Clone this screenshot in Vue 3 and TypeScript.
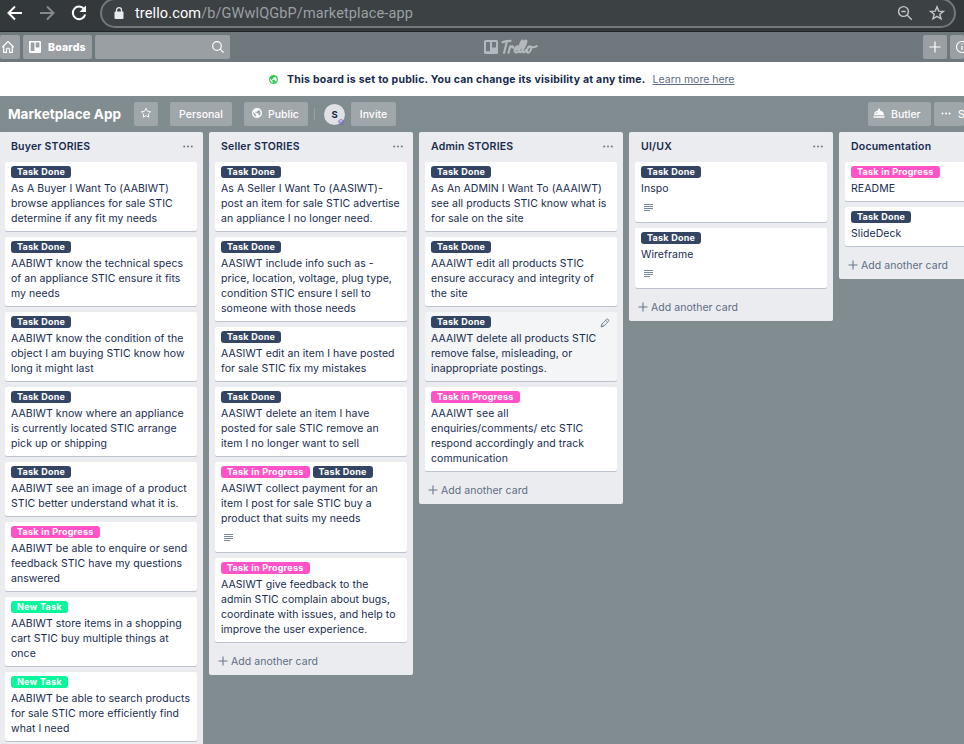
<script setup lang="ts">
type Kind = 'done' | 'progress' | 'fresh'

interface Card {
  labels: Kind[]
  lines: string[]
  description?: boolean
  hovered?: boolean
}

interface List {
  title: string
  cards: Card[]
}

const labelText: Record<Kind, string> = {
  done: 'Task Done',
  progress: 'Task in Progress',
  fresh: 'New Task',
}

const lists: List[] = [
  {
    title: 'Buyer STORIES',
    cards: [
      { labels: ['done'], lines: ['As A Buyer I Want To (AABIWT)', 'browse appliances for sale STIC', 'determine if any fit my needs'] },
      { labels: ['done'], lines: ['AABIWT know the technical specs', 'of an appliance STIC ensure it fits', 'my needs'] },
      { labels: ['done'], lines: ['AABIWT know the condition of the', 'object I am buying STIC know how', 'long it might last'] },
      { labels: ['done'], lines: ['AABIWT know where an appliance', 'is currently located STIC arrange', 'pick up or shipping'] },
      { labels: ['done'], lines: ['AABIWT see an image of a product', 'STIC better understand what it is.'] },
      { labels: ['progress'], lines: ['AABIWT be able to enquire or send', 'feedback STIC have my questions', 'answered'] },
      { labels: ['fresh'], lines: ['AABIWT store items in a shopping', 'cart STIC buy multiple things at', 'once'] },
      { labels: ['fresh'], lines: ['AABIWT be able to search products', 'for sale STIC more efficiently find', 'what I need'] },
    ],
  },
  {
    title: 'Seller STORIES',
    cards: [
      { labels: ['done'], lines: ['As A Seller I Want To (AASIWT)-', 'post an item for sale STIC advertise', 'an appliance I no longer need.'] },
      { labels: ['done'], lines: ['AASIWT include info such as -', 'price, location, voltage, plug type,', 'condition STIC ensure I sell to', 'someone with those needs'] },
      { labels: ['done'], lines: ['AASIWT edit an item I have posted', 'for sale STIC fix my mistakes'] },
      { labels: ['done'], lines: ['AASIWT delete an item I have', 'posted for sale STIC remove an', 'item I no longer want to sell'] },
      { labels: ['progress', 'done'], lines: ['AASIWT collect payment for an', 'item I post for sale STIC buy a', 'product that suits my needs'], description: true },
      { labels: ['progress'], lines: ['AASIWT give feedback to the', 'admin STIC complain about bugs,', 'coordinate with issues, and help to', 'improve the user experience.'] },
    ],
  },
  {
    title: 'Admin STORIES',
    cards: [
      { labels: ['done'], lines: ['As An ADMIN I Want To (AAAIWT)', 'see all products STIC know what is', 'for sale on the site'] },
      { labels: ['done'], lines: ['AAAIWT edit all products STIC', 'ensure accuracy and integrity of', 'the site'] },
      { labels: ['done'], lines: ['AAAIWT delete all products STIC', 'remove false, misleading, or', 'inappropriate postings.'], hovered: true },
      { labels: ['progress'], lines: ['AAAIWT see all', 'enquiries/comments/ etc STIC', 'respond accordingly and track', 'communication'] },
    ],
  },
  {
    title: 'UI/UX',
    cards: [
      { labels: ['done'], lines: ['Inspo'], description: true },
      { labels: ['done'], lines: ['Wireframe'], description: true },
    ],
  },
  {
    title: 'Documentation',
    cards: [
      { labels: ['progress'], lines: ['README'] },
      { labels: ['done'], lines: ['SlideDeck'] },
    ],
  },
]
</script>

<template>
  <div class="window">
    <div class="chrome">
      <div class="nav">
        <svg width="18" height="18" viewBox="0 0 18 18" class="nav-icon"><path d="M16 9H3M9 2.5 2.5 9 9 15.5" /></svg>
        <svg width="18" height="18" viewBox="0 0 18 18" class="nav-icon dim"><path d="M2 9h13M9 2.5 15.500 9 9 15.500" /></svg>
        <svg width="18" height="18" viewBox="0 0 18 18" class="nav-icon"><path d="M14.300 5.300A6.300 6.300 0 1 0 15.200 10.500" /><path class="solid" d="M16 1.500V8H9.500Z" /></svg>
      </div>
      <div class="address">
        <svg class="lock" width="10" height="13" viewBox="0 0 10 13"><rect x="0.500" y="4.500" width="9" height="7.500" rx="1" fill="#e8eaed" /><path d="M2.500 5V3.200a2.500 2.500 0 0 1 5 0V5" fill="none" stroke="#e8eaed" stroke-width="1.300" /></svg>
        <span class="url"><b>trello.com</b>/b/GWwlQGbP/marketplace-app</span>
        <svg class="zoom" width="16" height="16" viewBox="0 0 16 16"><circle cx="6.500" cy="6.500" r="4.900" /><path d="M4.300 6.500h4.400M10 10l4.800 4.800" /></svg>
        <svg class="fav" width="16" height="16" viewBox="0 0 16 16"><path d="M8 1.800 9.700 6.100l4.600.3-3.500 2.900 1.200 4.500L8 11.300l-4 2.500 1.200-4.500L1.700 6.400l4.600-.3Z" /></svg>
      </div>
    </div>

    <header class="topbar">
      <div class="btn home"><svg width="14" height="14" viewBox="0 0 14 14" class="line"><path d="M1.300 7.200 7 1.600l5.700 5.600M2.700 6.200v6.200h2.800V9.500a1.500 1.500 0 0 1 3 0v2.900h2.800V6.200" /></svg></div>
      <div class="btn boards">
        <svg width="12" height="12" viewBox="0 0 12 12"><path fill="#fff" fill-rule="evenodd" d="M1 0h10a1 1 0 0 1 1 1v10a1 1 0 0 1-1 1H1a1 1 0 0 1-1-1V1a1 1 0 0 1 1-1Zm.700 1.500v8.500h3.700V1.500Zm5 0v5h3.700v-5Z" /></svg>
        <span>Boards</span>
      </div>
      <div class="btn search"><svg width="14" height="14" viewBox="0 0 14 14" class="line"><circle cx="6" cy="6" r="4.300" /><path d="m9.200 9.200 3.300 3.300" /></svg></div>
      <div class="logo">
        <svg width="14" height="14" viewBox="0 0 14 14"><path fill="#b3b9bc" fill-rule="evenodd" d="M1.500 0h11A1.500 1.500 0 0 1 14 1.500v11a1.500 1.500 0 0 1-1.500 1.500h-11A1.500 1.500 0 0 1 0 12.500v-11A1.500 1.500 0 0 1 1.500 0Zm.500 2v9.300h4V2Zm6 0v5.500h4V2Z" /></svg>
        <svg class="wordmark" width="40" height="17" viewBox="0 0 40 17">
          <path d="M3.500 4.200C5.500 3.200 8 3 11.500 2.900M8 3.300 5 15M11.200 8.300 9.500 14.800M10.700 10.500C12 8.200 14.500 7.300 14 9.700M15.700 12.200c2.800-.6 4.600-3.500 3-3.900-1.700-.3-3.300 2.700-3.100 4.600.3 2.600 3 1.900 4.700-1 2.200-3.600 4.700-9.200 3.200-9.400-1.500 0-3.700 8-3.300 10.500.5 2.300 2.400.9 3.700-1.500 2.200-3.700 4.500-8.800 3-9-1.600 0-3.800 7.800-3.400 10.500.5 2.300 2.500 1.200 3.700-1.200M31.200 8.400c-2.400-.2-4.400 5.200-2.600 6.200 2.100.9 5.200-5.300 2.600-6.200ZM32.200 8.900c1.300.7 3.200.4 5.600-.8" />
        </svg>
      </div>
      <div class="btn plus"><svg width="14" height="14" viewBox="0 0 14 14" class="line"><path d="M7 1.500v11M1.500 7h11" /></svg></div>
      <div class="btn info"><svg width="14" height="14" viewBox="0 0 14 14" class="line"><circle cx="7" cy="7" r="5.500" /><path d="M7 6v4M7 3.600v1" /></svg></div>
    </header>

    <div class="notice">
      <svg width="9" height="9" viewBox="0 0 16 16"><circle cx="8" cy="8" r="8" fill="#2fcb53" /><path fill="#fff" d="M7 13.900A6 6 0 0 1 2.200 6.500L6 10.300v.7c0 .7.500 1.300 1 1.300Zm5.300-1.700c-.2-.6-.7-1-1.400-1h-.7V9c0-.4-.3-.7-.7-.7H5.500V6.800H7c.4 0 .7-.3.700-.7V4.600h1.500c.8 0 1.400-.6 1.400-1.400v-.3a6 6 0 0 1 1.700 9.300Z" /></svg>
      <b>This board is set to public. You can change its visibility at any time.</b>
      <a>Learn more here</a>
    </div>

    <div class="boardbar">
      <h1>Marketplace App</h1>
      <div class="btn star"><svg width="12" height="12" viewBox="0 0 16 16" class="line"><path d="M8 1.800 9.900 5.700l4.300.6-3.100 3 .7 4.300L8 11.600l-3.800 2 .7-4.300-3.100-3 4.300-.6Z" /></svg></div>
      <div class="btn personal">Personal</div>
      <div class="btn public">
        <svg width="10" height="10" viewBox="0 0 16 16"><path fill="#fff" fill-rule="evenodd" d="M8 0a8 8 0 1 1 0 16A8 8 0 0 1 8 0ZM7 13.900v-1.600c-.5 0-1-.6-1-1.300v-.7L2.200 6.500A6 6 0 0 0 7 13.900Zm5.300-1.700a6 6 0 0 0-1.700-9.300v.3c0 .8-.6 1.400-1.400 1.400H7.700v1.500c0 .4-.3.700-.7.700H5.500v1.500h4c.4 0 .7.300.7.700v2.200h.7c.7 0 1.200.4 1.400 1Z" /></svg>
        <span>Public</span>
      </div>
      <i class="divider"></i>
      <div class="avatar">S<svg class="rank" width="6" height="6" viewBox="0 0 6 6"><path d="M1 3.300V1.500Q1 .800 3 .800T5 1.500v1.800M.500 3.200h5M.500 5.300h5" /></svg></div>
      <div class="btn invite">Invite</div>
      <div class="btn butler">
        <svg width="12" height="11" viewBox="0 0 12 11"><path fill="#fff" d="M1 7a5 4.600 0 0 1 4-4.400V1.500A1 1 0 0 1 7 1.500v1.100A5 4.600 0 0 1 11 7Z" /><path d="m2.500 6 2-2" stroke="#9fa7aa" stroke-width=".800" /><path fill="#fff" opacity=".750" d="M0.500 7.700h11v2.300h-11Z" /></svg>
        <span>Butler</span>
      </div>
      <div class="btn menu">
        <svg width="10" height="3" viewBox="0 0 10 3" fill="#fff"><circle cx="1.500" cy="1.500" r="1" /><circle cx="5" cy="1.500" r="1" /><circle cx="8.500" cy="1.500" r="1" /></svg>
        <span>Show Menu</span>
      </div>
    </div>

    <main class="board">
      <section v-for="list in lists" :key="list.title" class="list">
        <div class="list-head">
          <h2>{{ list.title }}</h2>
          <svg width="10" height="3" viewBox="0 0 10 3" fill="#6b778c"><circle cx="1.200" cy="1.500" r="1" /><circle cx="5" cy="1.500" r="1" /><circle cx="8.800" cy="1.500" r="1" /></svg>
        </div>
        <div class="cards">
          <article v-for="card in list.cards" :key="card.lines[0]" class="card" :class="{ hovered: card.hovered }">
            <div class="labels">
              <span v-for="kind in card.labels" :key="kind" class="label" :class="kind">{{ labelText[kind] }}</span>
            </div>
            <p v-for="line in card.lines" :key="line">{{ line }}</p>
            <div v-if="card.description" class="badges">
              <svg width="9" height="8" viewBox="0 0 9 8"><path d="M0 .500h9M0 2.500h9M0 4.500h9M0 6.500h6" stroke="#7a869a" stroke-width="1" /></svg>
            </div>
            <svg v-if="card.hovered" class="pencil" width="10" height="10" viewBox="0 0 10 10"><path d="M1 9 1.700 6.300 6.600 1.300Q7.400.600 8.300 1.500T8.500 3.300L3.600 8.300ZM5.700 2.300 7.600 4.200M2 6.400 3.600 8" /></svg>
          </article>
        </div>
        <div class="add">
          <svg width="10" height="10" viewBox="0 0 10 10"><path d="M5 .500v9M.500 5h9" stroke="#6b778c" stroke-width="1.100" /></svg>
          <span>Add another card</span>
        </div>
      </section>
    </main>
  </div>
</template>

<style>
body {
  margin: 0;
  overflow: hidden;
}
</style>

<style scoped>
* {
  box-sizing: border-box;
}
.window {
  width: 964px;
  height: 744px;
  overflow: hidden;
  display: flex;
  flex-direction: column;
  background: #818c90;
  color: #172b4d;
  font-family: Inter, "Liberation Sans", sans-serif;
  font-size: 10.5px;
}
svg {
  display: block;
  flex: none;
}
.chrome {
  height: 32px;
  flex: none;
  display: flex;
  align-items: flex-start;
  background: #33383b;
  border-bottom: 1px solid #202426;
  overflow: hidden;
}
.nav {
  width: 100px;
  flex: none;
  display: flex;
  gap: 14px;
  padding: 4px 0 0 6px;
}
.nav-icon {
  fill: none;
  stroke: #fff;
  stroke-width: 2;
}
.nav-icon .solid {
  fill: #fff;
  stroke: none;
}
.dim {
  stroke: #85898b;
}
.address {
  width: 856px;
  height: 30px;
  flex: none;
  margin-top: -2px;
  display: flex;
  align-items: center;
  padding: 0 9px 0 12px;
  border: 2px solid #74787a;
  border-radius: 15px;
  background: #3c4144;
}
.url {
  margin-left: 11px;
  flex: 1;
  font-family: Roboto, sans-serif;
  font-size: 14.5px;
  letter-spacing: 0.12px;
  white-space: nowrap;
  color: #9aa0a4;
}
.url b {
  font-weight: 400;
  color: #fff;
}
.zoom,
.fav {
  fill: none;
  stroke: #c3c6c8;
  stroke-width: 1.4;
}
.fav {
  margin-left: 16px;
}
.topbar {
  height: 30px;
  flex: none;
  display: flex;
  align-items: center;
  gap: 3px;
  background: #6f787d;
  overflow: hidden;
}
.btn {
  height: 24px;
  flex: none;
  display: flex;
  align-items: center;
  border-radius: 2px;
  background: #9fa7aa;
  color: #fff;
  font-weight: 500;
  white-space: nowrap;
}
.topbar .btn {
  background: #999fa3;
}
.line {
  fill: none;
  stroke: #fff;
  stroke-width: 1.2;
}
.home {
  width: 20px;
  padding-left: 1px;
}
.boards {
  width: 69px;
  padding-left: 6px;
  gap: 7px;
  font-weight: 800;
  letter-spacing: 0.2px;
}
.search {
  width: 135px;
  justify-content: flex-end;
  padding-right: 5px;
}
.logo {
  flex: 1;
  display: flex;
  align-items: center;
  gap: 1px;
  padding-left: 251px;
}
.wordmark {
  margin-bottom: 1px;
  fill: none;
  stroke: #b3b9bc;
  stroke-width: 2.1;
  stroke-linecap: round;
}
.plus {
  width: 24px;
  justify-content: center;
}
.info {
  width: 14px;
  padding-left: 5px;
  overflow: hidden;
}
.notice {
  height: 34px;
  flex: none;
  display: flex;
  align-items: center;
  padding-left: 269px;
  background: #fff;
  white-space: nowrap;
}
.notice b {
  margin-left: 9px;
  font-weight: 700;
  letter-spacing: 0.24px;
}
.notice a {
  margin-left: 7px;
  color: #5e6c84;
  text-decoration: underline;
}
.boardbar {
  height: 36px;
  flex: none;
  display: flex;
  align-items: center;
  padding-left: 8px;
  overflow: hidden;
}
h1 {
  width: 126px;
  flex: none;
  margin: 0;
  font-size: 13.5px;
  font-weight: 700;
  color: #fff;
  white-space: nowrap;
}
.star {
  width: 24px;
  justify-content: center;
}
.star svg {
  margin-bottom: 2px;
}
.personal {
  width: 62px;
  margin-left: 12px;
  justify-content: center;
}
.public {
  width: 64px;
  margin-left: 12px;
  padding-left: 8px;
  gap: 6px;
}
.public svg {
  margin-bottom: 2px;
}
.divider {
  width: 1px;
  height: 12px;
  flex: none;
  margin: 0 9px 0 6px;
  background: #99a1a5;
}
.avatar {
  position: relative;
  width: 21px;
  height: 21px;
  flex: none;
  display: flex;
  align-items: center;
  justify-content: center;
  border-radius: 50%;
  background: #dfe1e6;
  font-size: 9.5px;
  font-weight: 700;
}
.rank {
  position: absolute;
  right: 1px;
  bottom: 0;
  fill: none;
  stroke: #7a63c8;
  stroke-width: 0.9;
}
.invite {
  width: 45px;
  margin-left: 6px;
  justify-content: center;
}
.butler {
  width: 63px;
  margin-left: auto;
  padding-left: 5px;
  gap: 6px;
}
.butler svg {
  margin-bottom: 1px;
}
.menu {
  width: 30px;
  margin-left: 3px;
  padding-left: 7px;
  gap: 7px;
  overflow: hidden;
}
.menu svg {
  margin-bottom: 2px;
}
.board {
  flex: 1;
  min-height: 0;
  display: flex;
  align-items: flex-start;
  gap: 6px;
  margin-left: -1px;
}
.list {
  width: 204px;
  flex: none;
  padding: 0 6px;
  border-radius: 2px;
  background: #ebecf0;
}
.list-head {
  height: 30px;
  display: flex;
  align-items: center;
  justify-content: space-between;
  padding: 0 4px 1px 6px;
}
.list-head svg {
  margin-bottom: 1px;
}
h2 {
  margin: 0;
  font-size: 10.5px;
  font-weight: 600;
  letter-spacing: 0.2px;
  white-space: nowrap;
}
.cards {
  display: flex;
  flex-direction: column;
  gap: 6px;
}
.card {
  position: relative;
  padding: 4px 6px 5px;
  border-radius: 2px;
  background: #fff;
  box-shadow: 0 1px 0 #bcc2ce;
}
.hovered {
  background: #f4f5f7;
}
.labels {
  display: flex;
  gap: 3px;
  margin-bottom: 3px;
}
.label {
  height: 12px;
  padding: 0 6px;
  border-radius: 3px;
  color: #fff;
  font-size: 9px;
  font-weight: 700;
  line-height: 12px;
  letter-spacing: 0.25px;
  white-space: nowrap;
}
.done {
  background: #344563;
}
.progress {
  background: #ff53c7;
}
.fresh {
  background: #08f79b;
}
p {
  height: 15px;
  margin: 0;
  line-height: 15px;
  letter-spacing: 0.06px;
  white-space: nowrap;
}
.badges {
  height: 21px;
  padding: 8px 0 0 3px;
}
.pencil {
  position: absolute;
  top: 6px;
  right: 7px;
  fill: none;
  stroke: #6b778c;
  stroke-width: 0.9;
}
.add {
  height: 33px;
  display: flex;
  align-items: center;
  gap: 3px;
  padding: 5px 0 0 3px;
  color: #5e6c84;
  letter-spacing: 0.04px;
}
</style>
